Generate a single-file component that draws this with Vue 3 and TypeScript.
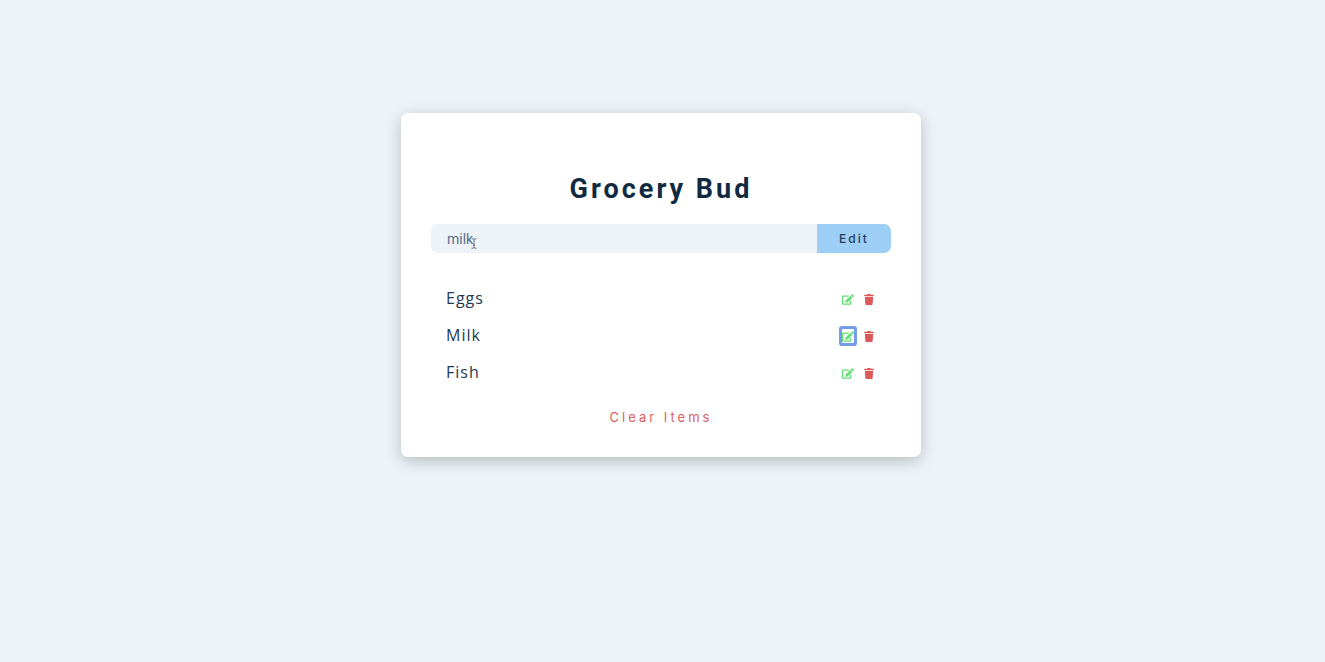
<script setup lang="ts">
import { ref } from 'vue'

interface Item {
  id: number
  title: string
}

const items = ref<Item[]>([
  { id: 1, title: 'Eggs' },
  { id: 2, title: 'Milk' },
  { id: 3, title: 'Fish' },
])
const editId = ref<number | null>(2)
const name = ref('milk')

function startEdit(item: Item) {
  editId.value = item.id
  name.value = item.title
}

function removeItem(id: number) {
  items.value = items.value.filter((item) => item.id !== id)
}

function submit() {
  const title = name.value.trim()
  if (!title) return
  const current = items.value.find((item) => item.id === editId.value)
  if (current) current.title = title
  else items.value.push({ id: Date.now(), title })
  editId.value = null
  name.value = ''
}
</script>

<template>
  <main class="page">
    <section class="card">
      <form @submit.prevent="submit">
        <h1>Grocery Bud</h1>
        <div class="control">
          <input v-model="name" class="grocery" type="text" aria-label="Grocery item" placeholder="e.g. eggs" />
          <button class="submit" type="submit">{{ editId === null ? 'Submit' : 'Edit' }}</button>
          <svg class="pointer" viewBox="0 0 6 11" aria-hidden="true">
            <path d="M.5 .8Q2.500 .5 3 1.500Q3.500 .5 5.500 .8M3 1.500V9.500M.5 10.200Q2.500 10.500 3 9.500Q3.500 10.500 5.500 10.200M2 7H4" fill="none" stroke="#fff" stroke-width="2" />
            <path d="M.5 .8Q2.500 .5 3 1.500Q3.500 .5 5.500 .8M3 1.500V9.500M.5 10.200Q2.500 10.500 3 9.500Q3.500 10.500 5.500 10.200M2 7H4" fill="none" stroke="#555" stroke-width=".9" />
          </svg>
        </div>
      </form>
      <ul class="list">
        <li v-for="item in items" :key="item.id" class="item">
          <span class="title">{{ item.title }}</span>
          <span class="actions">
            <button
              type="button"
              class="icon edit"
              :class="{ active: item.id === editId }"
              :aria-label="`Edit ${item.title}`"
              @click="startEdit(item)"
            >
              <svg viewBox="0 0 576 512" width="12" height="11">
                <path fill="currentColor" d="M402.6 83.2l90.2 90.2c3.8 3.8 3.8 10 0 13.8L274.4 405.6l-92.8 10.3c-12.4 1.4-22.9-9.1-21.5-21.5l10.3-92.8L388.8 83.2c3.8-3.8 10-3.8 13.8 0zm162-22.9l-48.8-48.8c-15.2-15.2-39.9-15.2-55.2 0l-35.4 35.4c-3.8 3.8-3.8 10 0 13.8l90.2 90.2c3.8 3.8 10 3.8 13.8 0l35.4-35.4c15.2-15.3 15.2-40 0-55.2zM384 346.2V448H64V128h229.8c3.2 0 6.2-1.3 8.5-3.5l40-40c7.6-7.6 2.2-20.5-8.5-20.5H48C21.5 64 0 85.5 0 112v352c0 26.5 21.5 48 48 48h352c26.5 0 48-21.5 48-48V306.2c0-10.7-12.9-16-20.5-8.5l-40 40c-2.2 2.3-3.5 5.3-3.5 8.5z" />
              </svg>
            </button>
            <button type="button" class="icon delete" :aria-label="`Delete ${item.title}`" @click="removeItem(item.id)">
              <svg viewBox="0 0 448 512" width="10" height="11">
                <path fill="currentColor" d="M432 32H312l-9.4-18.7A24 24 0 0 0 281.1 0H166.8a23.72 23.72 0 0 0-21.4 13.3L136 32H16A16 16 0 0 0 0 48v32a16 16 0 0 0 16 16h416a16 16 0 0 0 16-16V48a16 16 0 0 0-16-16zM53.2 467a48 48 0 0 0 47.9 45h245.8a48 48 0 0 0 47.9-45L416 128H32z" />
              </svg>
            </button>
          </span>
        </li>
      </ul>
      <button type="button" class="clear" @click="items = []">Clear Items</button>
    </section>
  </main>
</template>

<style>
body {
  background: #eef3fa;
}
</style>

<style scoped>
.page {
  box-sizing: border-box;
  padding: 113px 19px 48px 16px;
  font-family: 'Open Sans', sans-serif;
  color: #243a50;
}
.card {
  box-sizing: border-box;
  max-width: 520px;
  margin: 0 auto;
  padding: 60px 30px 30px;
  background: #fff;
  border-radius: 7px;
  box-shadow: 0 4px 16px rgba(0, 24, 0, 0.24);
  display: flex;
  flex-direction: column;
}
h1 {
  margin: 0 0 19px;
  font: 700 27px/32px Roboto, sans-serif;
  letter-spacing: 3px;
  text-align: center;
  color: #102a42;
}
.control {
  position: relative;
  display: flex;
  height: 29px;
}
.grocery {
  flex: 1;
  min-width: 0;
  box-sizing: border-box;
  border: 0;
  padding: 1px 16px;
  border-radius: 7px 0 0 7px;
  background: #eef3fa;
  color: #587087;
  font: 14px/20px Roboto, sans-serif;
}
.submit {
  width: 74px;
  border: 0;
  padding: 0;
  border-radius: 0 7px 7px 0;
  background: #9ccef6;
  color: #233f57;
  font: 500 12px/20px Inter, sans-serif;
  letter-spacing: 2px;
  cursor: pointer;
}
.pointer {
  position: absolute;
  left: 40px;
  top: 14px;
  width: 6px;
  height: 11px;
  pointer-events: none;
}
.list {
  list-style: none;
  margin: 30px 0 0;
  padding: 0;
}
.item {
  display: flex;
  align-items: center;
  justify-content: space-between;
  height: 29px;
  margin-bottom: 8px;
  padding: 0 17px 0 15px;
}
.title {
  font-size: 16px;
  line-height: 24px;
  letter-spacing: 1px;
}
.actions {
  display: flex;
  gap: 10px;
  padding-top: 3px;
}
.icon {
  display: flex;
  align-items: center;
  height: 14px;
  padding: 0;
  border: 0;
  background: transparent;
  cursor: pointer;
}
.edit {
  color: #66de76;
}
.edit.active {
  border-radius: 1px;
  box-shadow: 0 0 0 3px #759cec;
}
.delete {
  color: #dc5959;
}
.clear {
  align-self: center;
  margin-top: 13px;
  padding: 0;
  border: 0;
  background: transparent;
  color: #dc6060;
  font: 13px/20px Inter, sans-serif;
  letter-spacing: 3px;
  cursor: pointer;
}
</style>
